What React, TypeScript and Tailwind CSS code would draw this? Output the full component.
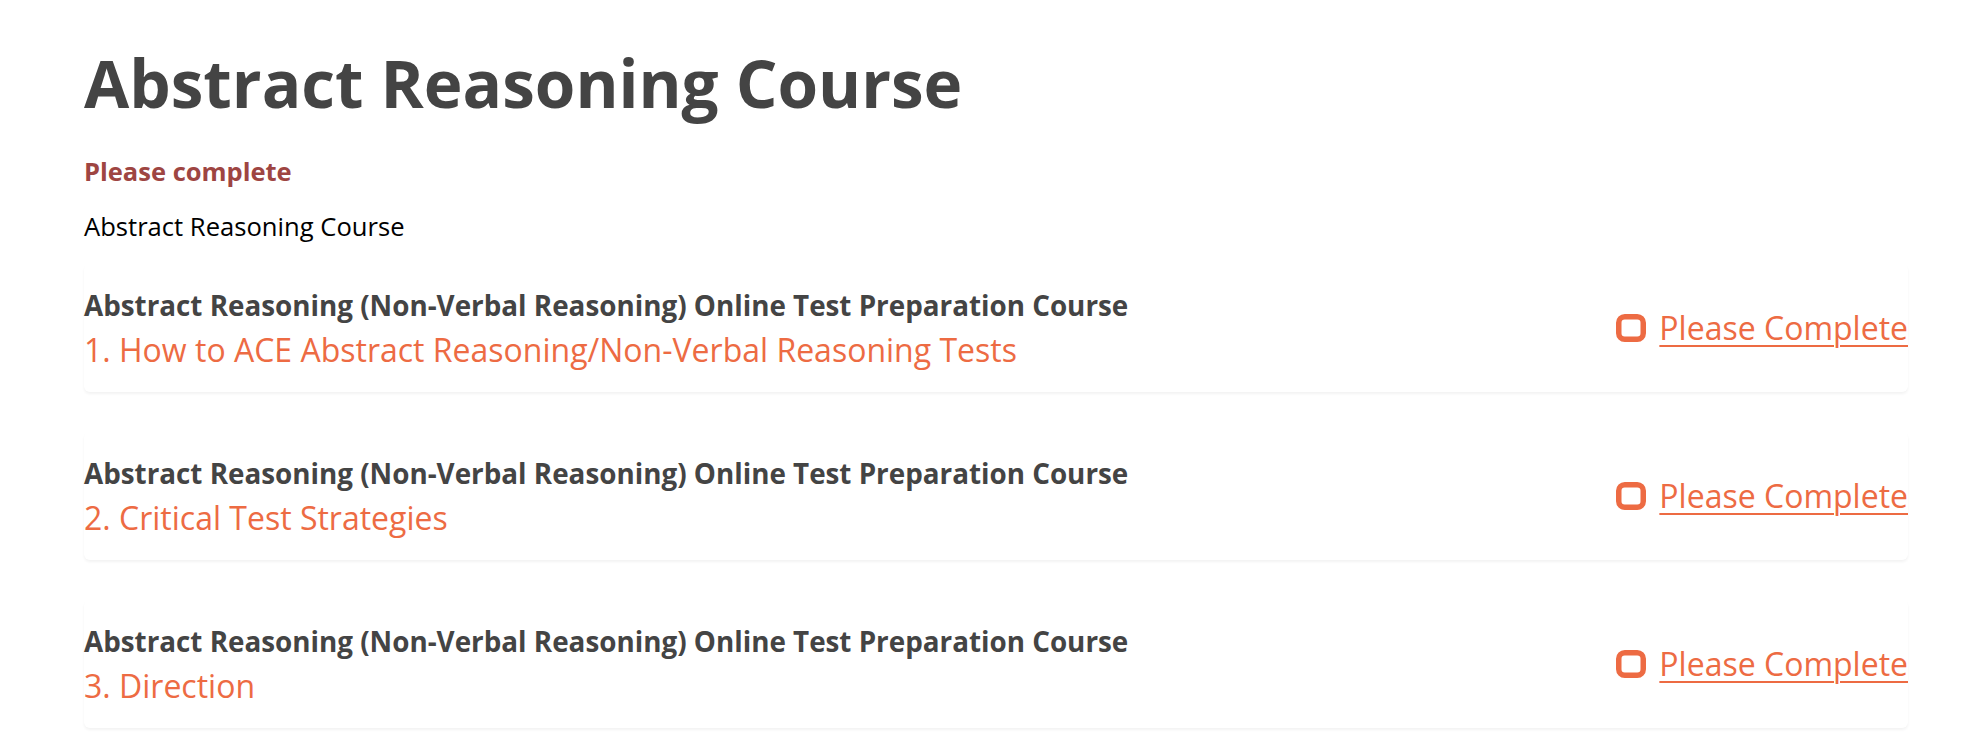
const LESSONS = [
  "1. How to ACE Abstract Reasoning/Non-Verbal Reasoning Tests",
  "2. Critical Test Strategies",
  "3. Direction",
];

const COURSE = "Abstract Reasoning (Non-Verbal Reasoning) Online Test Preparation Course";

function SquareIcon() {
  return (
    <svg width="30" height="28" viewBox="0 0 30 28" fill="none" className="shrink-0">
      <rect x="2.75" y="2.75" width="24.5" height="22.5" rx="6" stroke="#ed6b43" strokeWidth="5.5" />
    </svg>
  );
}

export default function App() {
  return (
    <div className="min-h-screen bg-white pl-[84px] pr-[66px] pt-[44px] font-['Open_Sans',sans-serif]">
      <h1 className="text-[65.6px] font-bold leading-[1.2] text-[#444444]">Abstract Reasoning Course</h1>
      <p className="mt-[30px] text-[25.5px] font-bold leading-[36px] text-[#9e4542]">Please complete</p>
      <p className="mt-[20px] text-[25.6px] leading-[36px] text-black">Abstract Reasoning Course</p>

      <ul className="mt-[19px] flex flex-col gap-[40px]">
        {LESSONS.map((lesson) => (
          <li
            key={lesson}
            className="flex h-[128px] items-center justify-between rounded-md bg-white shadow-[0_2px_3px_rgba(0,0,0,0.05)]"
          >
            <div className="flex flex-col">
              <span className="text-[27.8px] font-bold leading-[44px] text-[#444444]">{COURSE}</span>
              <a href="#" className="text-[32px] leading-[46px] text-[#ed6b43]">
                {lesson}
              </a>
            </div>
            <div className="flex items-center gap-[13px]">
              <SquareIcon />
              <a
                href="#"
                className="text-[32px] leading-[46px] text-[#ed6b43] underline decoration-2 underline-offset-[5px]"
              >
                Please Complete
              </a>
            </div>
          </li>
        ))}
      </ul>
    </div>
  );
}
